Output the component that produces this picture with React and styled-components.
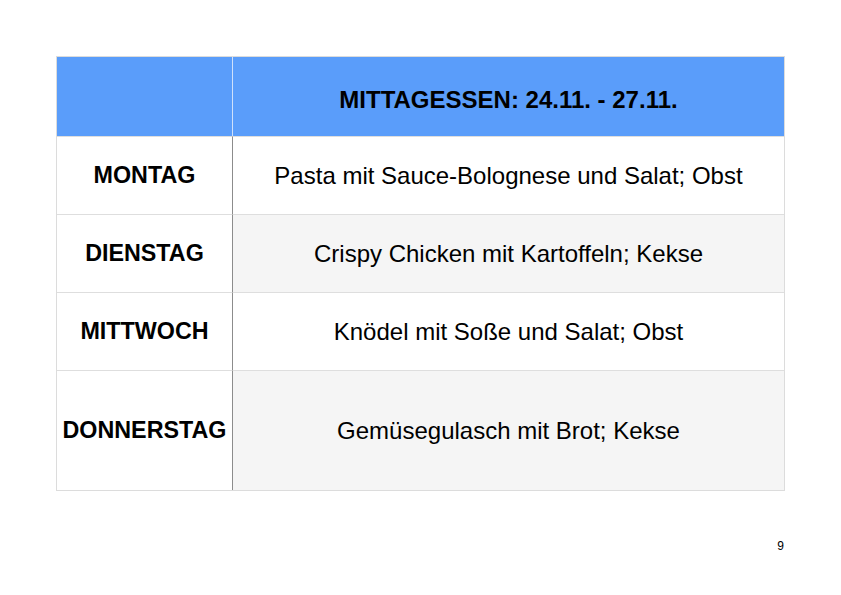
import React from "react";
import styled, { createGlobalStyle } from "styled-components";

const Global = createGlobalStyle`
  html, body { margin: 0; padding: 0; background: #fff; }
  body { font-family: "Liberation Sans", Arial, sans-serif; color: #000; }
`;

const Page = styled.div`
  width: 841px;
  height: 595px;
  box-sizing: border-box;
  padding: 56px 56px 0 56px;
  display: flex;
  flex-direction: column;
  position: relative;
`;

const Table = styled.div`
  display: grid;
  grid-template-columns: 176px 1fr;
  grid-template-rows: 79px 78px 78px 78px 120px;
  width: 729px;
  border: 1px solid #dcdcdc;
  box-sizing: border-box;
`;

const Cell = styled.div`
  display: flex;
  align-items: center;
  justify-content: center;
  text-align: center;
  font-size: ${p => (p.$day ? "23.3px" : "24px")};
  background: ${p => (p.$head ? "#5a9dfa" : p.$shade ? "#f5f5f5" : "#fff")};
  font-weight: ${p => (p.$bold ? 700 : 400)};
  border-top: ${p => (p.$first ? "none" : "1px solid #dedede")};
  border-right: ${p => (p.$left ? (p.$head ? "1px solid #cfe1fb" : "1px solid #8c8c8c") : "none")};
  padding-top: ${p => (p.$head ? "6px" : "0")};
  white-space: nowrap;
`;

const PageNum = styled.div`
  position: absolute;
  right: 57px;
  top: 539px;
  font-size: 12px;
`;

const rows = [
  ["MONTAG", "Pasta mit Sauce-Bolognese und Salat; Obst", false],
  ["DIENSTAG", "Crispy Chicken mit Kartoffeln; Kekse", true],
  ["MITTWOCH", "Knödel mit Soße und Salat; Obst", false],
  ["DONNERSTAG", "Gemüsegulasch mit Brot; Kekse", true],
];

export default function App() {
  return (
    <>
      <Global />
      <Page>
        <Table>
          <Cell $head $left $first />
          <Cell $head $bold $first>MITTAGESSEN: 24.11. - 27.11.</Cell>
          {rows.map(([d, m, s]) => (
            <React.Fragment key={d}>
              <Cell $left $bold $day>{d}</Cell>
              <Cell $shade={s}>{m}</Cell>
            </React.Fragment>
          ))}
        </Table>
        <PageNum>9</PageNum>
      </Page>
    </>
  );
}
